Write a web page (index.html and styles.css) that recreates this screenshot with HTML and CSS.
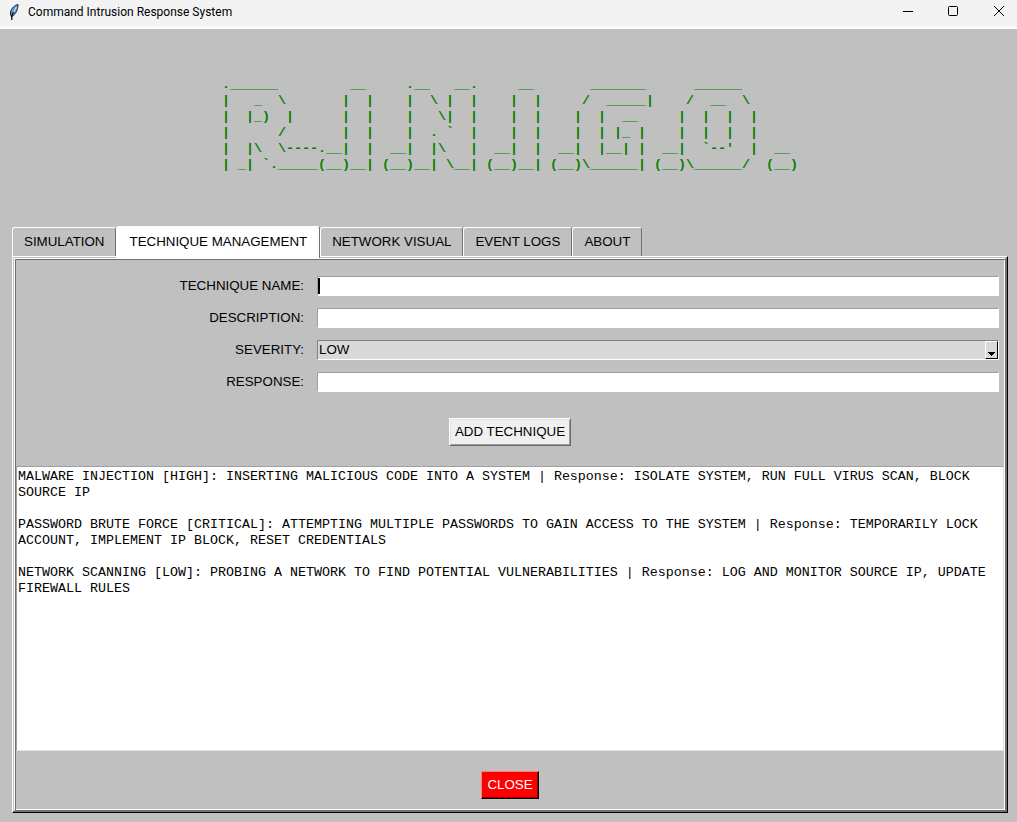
FILE: index.html
```html
<!DOCTYPE html>
<html lang="en">
<head>
<meta charset="utf-8">
<title>Command Intrusion Response System</title>
<link rel="stylesheet" href="styles.css">
</head>
<body>
<header class="titlebar">
  <svg class="feather" width="16" height="18" viewBox="0 0 16 18" aria-hidden="true">
    <path d="M12 1.500C9 2 5.500 5 4.500 9L4.500 12L6 13.500C9 12 12 7 12 1.500Z" fill="#5b9be6" stroke="#222" stroke-width="1"/>
    <path d="M10.500 4L6.500 11" stroke="#dcecff" stroke-width="1" fill="none"/>
    <path d="M7.500 9L5.500 13.500L6 17" stroke="#000" stroke-width="1.200" fill="none"/>
  </svg>
  <h1 class="title">Command Intrusion Response System</h1>
  <div class="window-controls">
    <button class="window-button" aria-label="Minimize"><svg width="12" height="12" viewBox="0 0 12 12"><path d="M1 5.500H11" stroke="#000" fill="none"/></svg></button>
    <button class="window-button" aria-label="Maximize"><svg width="12" height="12" viewBox="0 0 12 12"><rect x="1.500" y="0.500" width="9" height="9" rx="1" stroke="#000" fill="none"/></svg></button>
    <button class="window-button" aria-label="Close window"><svg width="12" height="12" viewBox="0 0 12 12"><path d="M2 0L12 10M12 0L2 10" stroke="#000" fill="none"/></svg></button>
  </div>
</header>
<main class="window">
<pre class="banner">
.______         __     .__   __.     __       _______      ______ 
|   _  \       |  |    |  \ |  |    |  |     /  _____|    /  __  \
|  |_)  |      |  |    |   \|  |    |  |    |  |  __     |  |  |  |
|      /       |  |    |  . `  |    |  |    |  | |_ |    |  |  |  |
|  |\  \----.__|  |  __|  |\   |  __|  |  __|  |__| |  __|  `--'  |  __
| _| `._____(__)__| (__)__| \__| (__)__| (__)\______| (__)\______/  (__)</pre>
  <nav class="tabs" role="tablist">
    <button class="tab" role="tab">SIMULATION</button>
    <button class="tab tab-selected" role="tab" aria-selected="true">TECHNIQUE MANAGEMENT</button>
    <button class="tab" role="tab">NETWORK VISUAL</button>
    <button class="tab" role="tab">EVENT LOGS</button>
    <button class="tab" role="tab">ABOUT</button>
  </nav>
  <section class="notebook">
    <div class="panel">
      <form class="form">
        <label for="name">TECHNIQUE NAME:</label>
        <div class="field"><input class="entry" id="name" type="text"><span class="caret"></span></div>
        <label for="description">DESCRIPTION:</label>
        <div class="field"><input class="entry" id="description" type="text"></div>
        <label for="severity">SEVERITY:</label>
        <div class="field">
          <select class="entry combo" id="severity"><option>LOW</option><option>HIGH</option><option>CRITICAL</option></select>
          <span class="combo-arrow"><svg width="7" height="4" viewBox="0 0 7 4" shape-rendering="crispEdges"><path d="M0 0H7V1H6V2H5V3H4V4H3V3H2V2H1V1H0Z" fill="#000"/></svg></span>
        </div>
        <label for="response">RESPONSE:</label>
        <div class="field"><input class="entry" id="response" type="text"></div>
      </form>
      <button class="button add">ADD TECHNIQUE</button>
      <textarea class="log" aria-label="Techniques" spellcheck="false">MALWARE INJECTION [HIGH]: INSERTING MALICIOUS CODE INTO A SYSTEM | Response: ISOLATE SYSTEM, RUN FULL VIRUS SCAN, BLOCK SOURCE IP

PASSWORD BRUTE FORCE [CRITICAL]: ATTEMPTING MULTIPLE PASSWORDS TO GAIN ACCESS TO THE SYSTEM | Response: TEMPORARILY LOCK ACCOUNT, IMPLEMENT IP BLOCK, RESET CREDENTIALS

NETWORK SCANNING [LOW]: PROBING A NETWORK TO FIND POTENTIAL VULNERABILITIES | Response: LOG AND MONITOR SOURCE IP, UPDATE FIREWALL RULES</textarea>
      <button class="button close">CLOSE</button>
    </div>
  </section>
</main>
</body>
</html>
```
FILE: styles.css
```css
* {
  box-sizing: border-box;
}

body {
  display: flex;
  flex-direction: column;
  min-height: 100vh;
  margin: 0;
  background: #c0c0c0;
  color: #000;
  font: 10pt/16px "Liberation Sans", sans-serif;
}

button,
input,
select {
  margin: 0;
  border-radius: 0;
  color: inherit;
  font: inherit;
}

.titlebar {
  display: flex;
  align-items: center;
  height: 29px;
  padding: 0 1px 4px 6px;
  border-bottom: 2px solid #fff;
  background: #f3f3f3;
}

.feather {
  margin-right: 6px;
}

.title {
  flex: 1;
  margin: 0;
  font: 400 12px/16px Roboto, "Noto Sans", sans-serif;
}

.window-controls {
  display: flex;
}

.window-button {
  display: flex;
  align-items: center;
  justify-content: center;
  width: 45px;
  height: 23px;
  padding: 0 0 0 8px;
  border: 0;
  background: none;
}

.window {
  display: flex;
  flex: 1;
  flex-direction: column;
  padding: 48px 9px 9px 12px;
}

.banner {
  align-self: center;
  margin: 0 0 53px;
  color: #008000;
  font: bold 10pt/16px "Liberation Mono", monospace;
}

.tabs {
  display: flex;
  align-items: flex-end;
}

.tab {
  height: 29px;
  padding: 0 11px;
  border: 1px solid;
  border-color: #fff #707070 #c0c0c0 #fff;
  border-bottom: 0;
  border-radius: 3px 3px 0 0;
  background: #c0c0c0;
}

.tab-selected {
  z-index: 1;
  height: 32px;
  margin-bottom: -2px;
  padding: 0 12px 2px;
  background: #fff;
}

.notebook {
  display: flex;
  flex: 1;
  border: 1px solid;
  border-color: #fff #000 #000 #fff;
  padding: 1px;
  box-shadow: inset -1px -1px #707070;
}

.panel {
  display: flex;
  flex: 1;
  flex-direction: column;
  align-items: center;
  border: 1px solid;
  border-color: #fff #707070 #707070 #fff;
  padding: 1px 1px 11px;
  box-shadow: inset 1px 1px #707070, inset -1px -1px #fff;
}

.form {
  display: grid;
  grid-template-columns: 287px 1fr;
  gap: 12px 13px;
  align-items: center;
  align-self: stretch;
  padding: 16px 5px 0 1px;
  text-align: right;
}

.field {
  display: flex;
  position: relative;
}

.entry {
  flex: 1;
  min-width: 0;
  height: 20px;
  padding: 0 1px;
  border: 1px solid;
  border-color: #a0a0a0 #fff #fff #a0a0a0;
  outline: 0;
  background: #fff;
}

.combo {
  appearance: none;
  border-color: #808080 #fff #fff #808080;
  background: #d9d9d9;
}

.caret {
  position: absolute;
  top: 2px;
  left: 1px;
  width: 2px;
  height: 16px;
  background: #000;
}

.combo-arrow {
  display: flex;
  position: absolute;
  top: 1px;
  right: 1px;
  align-items: flex-end;
  justify-content: center;
  width: 13px;
  height: 18px;
  padding-bottom: 2px;
  border: 1px solid;
  border-color: #fff #000 #000 #fff;
  background: #d9d9d9;
  pointer-events: none;
}

.button {
  height: 28px;
  padding: 0 5px;
  border: 1px solid;
}

.add {
  margin: 26px 0 20px;
  border-color: #fff #696969 #696969 #fff;
  background: #f0f0f0;
  box-shadow: inset 1px 1px #e3e3e3, inset -1px -1px #a0a0a0;
}

.log {
  flex: 1;
  align-self: stretch;
  margin: 0;
  padding: 2px 0 0 1px;
  border: 1px solid;
  border-color: #a0a0a0 #e3e3e3 #e3e3e3 #a0a0a0;
  outline: 0;
  background: #fff;
  color: #000;
  font: 10pt/16px "Liberation Mono", monospace;
  resize: none;
}

.close {
  margin-top: 20px;
  border-color: #ff7f7f #000 #000 #ff7f7f;
  background: #f00;
  box-shadow: inset -1px -1px #900000;
  color: #fff;
}
```
